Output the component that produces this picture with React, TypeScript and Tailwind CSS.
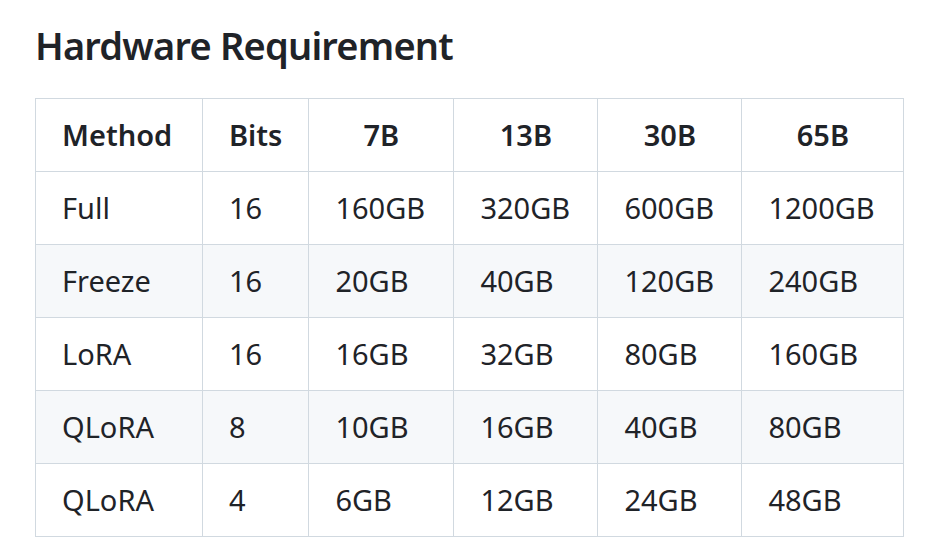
import React from 'react';

// Tableau des besoins matériels, rendu façon markdown GitHub
const columns = [
  { label: 'Method', width: 167, align: 'left' },
  { label: 'Bits', width: 106, align: 'left' },
  { label: '7B', width: 145, align: 'center' },
  { label: '13B', width: 144, align: 'center' },
  { label: '30B', width: 144, align: 'center' },
  { label: '65B', width: 162, align: 'center' },
];

const rows = [
  ['Full', '16', '160GB', '320GB', '600GB', '1200GB'],
  ['Freeze', '16', '20GB', '40GB', '120GB', '240GB'],
  ['LoRA', '16', '16GB', '32GB', '80GB', '160GB'],
  ['QLoRA', '8', '10GB', '16GB', '40GB', '80GB'],
  ['QLoRA', '4', '6GB', '12GB', '24GB', '48GB'],
];

const App: React.FC = () => {
  return (
    <div className="w-[933px] h-[559px] bg-white text-[#1f2328] font-['Noto_Sans',sans-serif] overflow-hidden">
      <h2 className="pl-[35px] pt-[18px] text-[38px] leading-[54px] font-semibold tracking-[-0.8px]">
        Hardware Requirement
      </h2>
      <table className="ml-[35px] mt-[26px] table-fixed border-collapse text-[29px] leading-[42px]">
        <colgroup>
          {columns.map((c) => (
            <col key={c.label} style={{ width: c.width }} />
          ))}
        </colgroup>
        <thead>
          <tr>
            {columns.map((c) => (
              <th
                key={c.label}
                className={`h-[73px] px-[26px] border border-[#d1d9e0] font-semibold ${c.align === 'center' ? 'text-center' : 'text-left'}`}
              >
                {c.label}
              </th>
            ))}
          </tr>
        </thead>
        <tbody>
          {rows.map((r, i) => (
            <tr key={i} className={i % 2 === 1 ? 'bg-[#f6f8fa]' : 'bg-white'}>
              {r.map((cell, j) => (
                <td key={j} className="h-[73px] px-[26px] border border-[#d1d9e0] text-left">
                  {cell}
                </td>
              ))}
            </tr>
          ))}
        </tbody>
      </table>
    </div>
  );
};

export default App;
